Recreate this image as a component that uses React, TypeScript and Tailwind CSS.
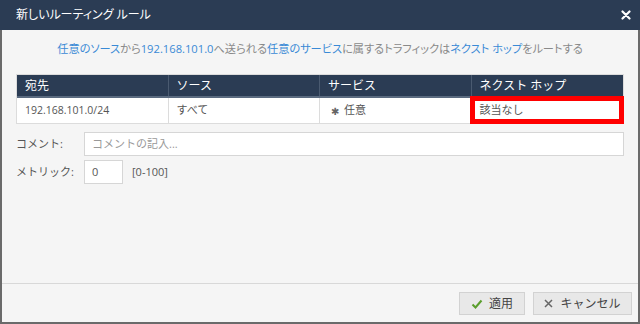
import React from 'react'

const Link = ({ children }: { children: React.ReactNode }) => (
  <span className="text-[#3a8ad6]">{children}</span>
)

const App = () => {
  return (
    <div className="w-[640px] h-[324px] flex flex-col bg-[#f5f5f5] text-[#444] font-['Open_Sans','Noto_Sans_CJK_JP',sans-serif]">
      <div className="h-[30px] shrink-0 bg-[#2b3c54] flex items-center justify-between pl-[16px] pr-[9px]">
        <span className="text-white text-[12px] leading-none [font-feature-settings:'palt']">新しいルーティング ルール</span>
        <svg width="10" height="10" viewBox="0 0 10 10">
          <path d="M1.5 1.5 L8.5 8.5 M8.5 1.5 L1.5 8.5" stroke="white" strokeWidth="2.2" strokeLinecap="round" />
        </svg>
      </div>

      <div className="flex-1 flex flex-col border-x-2 border-b-2 border-[#6a6a6a]">
        <div className="flex-1 px-[14px]">
          <p className="mt-[10px] h-[18px] text-center whitespace-nowrap text-[11.2px] leading-[18px] text-[#8a8a8a] [font-feature-settings:'palt']">
            <Link>任意のソース</Link>から<Link>192.168.101.0</Link>へ送られる<Link>任意のサービス</Link>に属するトラフィックは<Link>ネクスト ホップ</Link>をルートする
          </p>

          <div className="mt-[16px] border border-[#dcdcdc] bg-white">
            <div className="grid grid-cols-4 h-[23px] bg-[#2b3c54] text-white text-[12px] border-b-2 border-[#5b6b80]">
              <div className="flex items-center pl-[8px] border-r border-[#4a5a70]">宛先</div>
              <div className="flex items-center pl-[8px] border-r border-[#4a5a70]">ソース</div>
              <div className="flex items-center pl-[8px] border-r border-[#4a5a70]">サービス</div>
              <div className="flex items-center pl-[8px]">ネクスト ホップ</div>
            </div>
            <div className="grid grid-cols-4 h-[25px] text-[10.5px] text-[#555]">
              <div className="flex items-center pl-[8px] border-r border-[#dcdcdc]">192.168.101.0/24</div>
              <div className="flex items-center pl-[8px] border-r border-[#dcdcdc] text-[11px]">すべて</div>
              <div className="flex items-center pl-[11px] border-r border-[#dcdcdc] gap-[5px] text-[11px]">
                <span className="text-[10px] text-[#666] leading-none">✱</span>
                <span>任意</span>
              </div>
              <div className="relative flex items-center pl-[8px] text-[11px]">
                該当なし
                <div className="absolute -left-[2px] -right-[1px] -top-[2px] -bottom-[1px] border-[5px] border-[#ff0000]" />
              </div>
            </div>
          </div>

          <div className="mt-[8px] flex items-center h-[24px] text-[11px]">
            <span className="w-[68px] text-[#555]">コメント:</span>
            <div className="flex-1 h-full bg-white border border-[#d6d6d6] flex items-center px-[7px] text-[#999]">
              コメントの記入...
            </div>
          </div>

          <div className="mt-[4px] flex items-center h-[24px] text-[11px]">
            <span className="w-[68px] text-[#555]">メトリック:</span>
            <div className="w-[39px] h-full bg-white border border-[#d6d6d6] flex items-center px-[7px] text-[#555]">
              0
            </div>
            <span className="ml-[9px] text-[#555]">[0-100]</span>
          </div>
        </div>

        <div className="h-[39px] shrink-0 border-t border-[#d8d8d8] flex items-start justify-end pt-[8px] pr-[6px] gap-[8px] text-[12px]">
          <button className="w-[66px] h-[23px] bg-[#e8e8e8] border border-[#d2d2d2] flex items-center justify-center gap-[6px] text-[#444]">
            <svg width="12" height="10" viewBox="0 0 12 10">
              <path d="M1.5 5.5 L4.5 8.5 L10.5 1.5" fill="none" stroke="#5a9e2c" strokeWidth="2" />
            </svg>
            適用
          </button>
          <button className="w-[99px] h-[23px] bg-[#e8e8e8] border border-[#d2d2d2] flex items-center justify-center gap-[7px] text-[#444]">
            <svg width="9" height="9" viewBox="0 0 9 9">
              <path d="M1 1 L8 8 M8 1 L1 8" stroke="#666" strokeWidth="1.5" />
            </svg>
            キャンセル
          </button>
        </div>
      </div>
    </div>
  )
}

export default App
